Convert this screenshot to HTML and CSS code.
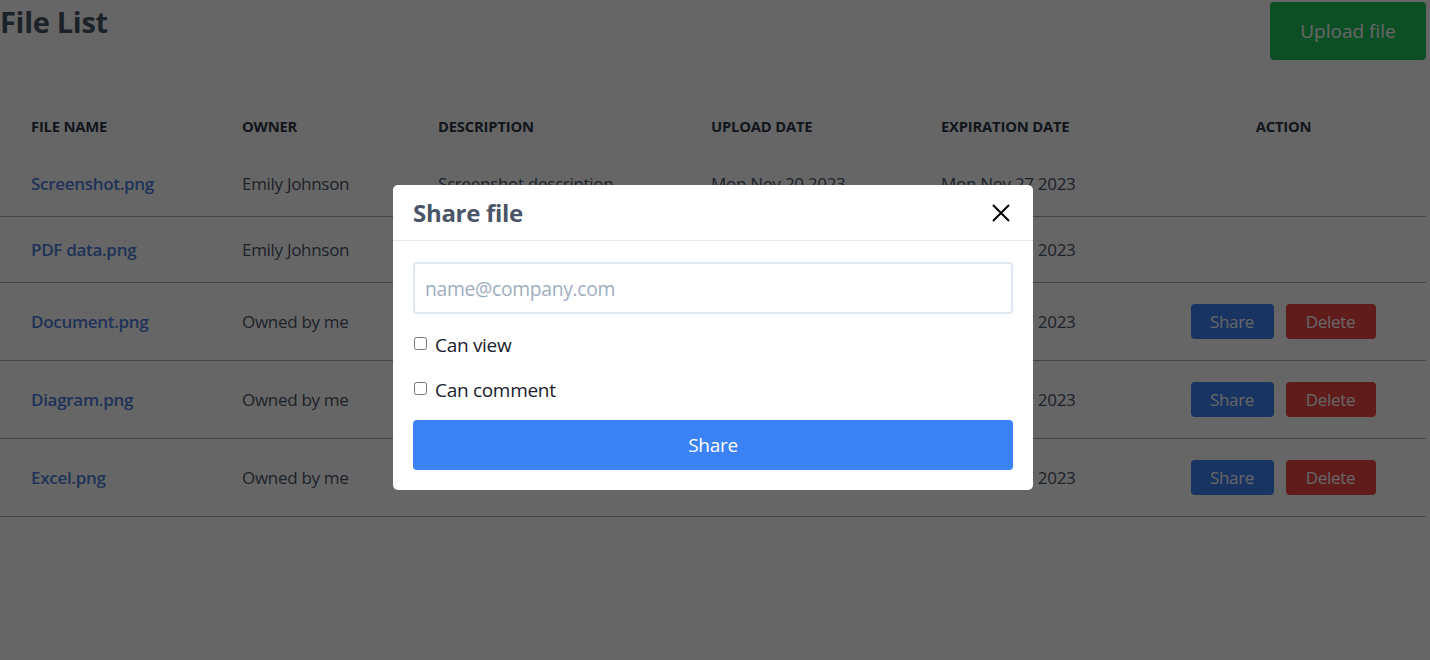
FILE: index.html
```html
<!DOCTYPE html>
<html lang="en">
<head>
<meta charset="utf-8">
<title>File List</title>
<link rel="stylesheet" href="styles.css">
</head>
<body>
<div class="page">
  <div class="top">
    <h1 class="title">File List</h1>
    <button class="upload-btn">Upload file</button>
  </div>
  <table class="files">
    <colgroup>
      <col class="c1"><col class="c2"><col class="c3"><col class="c4"><col class="c5"><col class="c6">
    </colgroup>
    <thead>
      <tr>
        <th>File name</th>
        <th>Owner</th>
        <th>Description</th>
        <th>Upload date</th>
        <th>Expiration date</th>
        <th class="center">Action</th>
      </tr>
    </thead>
    <tbody>
      <tr>
        <td><a class="file-link" href="#">Screenshot.png</a></td>
        <td>Emily Johnson</td>
        <td>Screenshot description</td>
        <td>Mon Nov 20 2023</td>
        <td>Mon Nov 27 2023</td>
        <td class="center"></td>
      </tr>
      <tr>
        <td><a class="file-link" href="#">PDF data.png</a></td>
        <td>Emily Johnson</td>
        <td>PDF data description</td>
        <td>Mon Nov 20 2023</td>
        <td>Mon Nov 27 2023</td>
        <td class="center"></td>
      </tr>
      <tr class="own">
        <td><a class="file-link" href="#">Document.png</a></td>
        <td>Owned by me</td>
        <td>Document description</td>
        <td>Mon Nov 20 2023</td>
        <td>Mon Nov 27 2023</td>
        <td class="center"><div class="actions"><button class="btn btn-share">Share</button><button class="btn btn-delete">Delete</button></div></td>
      </tr>
      <tr class="own">
        <td><a class="file-link" href="#">Diagram.png</a></td>
        <td>Owned by me</td>
        <td>Diagram description</td>
        <td>Mon Nov 20 2023</td>
        <td>Mon Nov 27 2023</td>
        <td class="center"><div class="actions"><button class="btn btn-share">Share</button><button class="btn btn-delete">Delete</button></div></td>
      </tr>
      <tr class="own">
        <td><a class="file-link" href="#">Excel.png</a></td>
        <td>Owned by me</td>
        <td>Excel description</td>
        <td>Mon Nov 20 2023</td>
        <td>Mon Nov 27 2023</td>
        <td class="center"><div class="actions"><button class="btn btn-share">Share</button><button class="btn btn-delete">Delete</button></div></td>
      </tr>
    </tbody>
  </table>
</div>

<div class="overlay">
  <div class="modal">
    <div class="modal-header">
      <h2 class="modal-title">Share file</h2>
      <button class="close-btn" aria-label="Close">
        <svg width="20" height="20" viewBox="0 0 20 20"><path d="M2 2 L18 18 M18 2 L2 18" stroke="#000" stroke-width="2" fill="none"/></svg>
      </button>
    </div>
    <div class="modal-body">
      <input class="email" type="email" placeholder="name@company.com">
      <label class="check"><input type="checkbox"> Can view</label>
      <label class="check"><input type="checkbox"> Can comment</label>
      <button class="share-submit">Share</button>
    </div>
  </div>
</div>
</body>
</html>
```

FILE: styles.css
```css
* { box-sizing: border-box; }
html, body { margin: 0; padding: 0; background: #ffffff; }
body {
  font-family: "Open Sans", "Noto Sans", sans-serif;
  color: #4a5568;
}
.page { width: 1426px; }

.top {
  display: flex;
  justify-content: space-between;
  align-items: flex-start;
  height: 62px;
}
.title {
  margin: 0;
  font-size: 29px;
  line-height: 44px;
  font-weight: 700;
  color: #4a5568;
  letter-spacing: -0.3px;
}
.upload-btn {
  margin-top: 2px;
  width: 156px;
  height: 58px;
  border: 0;
  border-radius: 4px;
  background: #22c55e;
  color: #ffffff;
  font-family: inherit;
  font-size: 19px;
}

.files {
  margin-top: 38px;
  width: 1426px;
  border-collapse: collapse;
  table-layout: fixed;
}
.c1 { width: 211px; }
.c2 { width: 196px; }
.c3 { width: 273px; }
.c4 { width: 230px; }
.c5 { width: 231px; }
.c6 { width: 285px; }

.files th {
  text-align: left;
  padding: 16px 0 15px 31px;
  font-size: 14.8px;
  line-height: 20px;
  font-weight: 700;
  text-transform: uppercase;
  color: #2d3748;
  letter-spacing: -0.2px;
}
.files td {
  padding: 20px 0 20px 31px;
  font-size: 17px;
  line-height: 25px;
  color: #4a5568;
  border-bottom: 1px solid #a0aec0;
  white-space: nowrap;
  overflow: hidden;
  letter-spacing: -0.3px;
}
.files th.center, .files td.center { text-align: center; padding-left: 0; }
.file-link {
  color: #4f7ddb;
  font-weight: 600;
  text-decoration: none;
}
.actions {
  display: flex;
  justify-content: center;
  gap: 12px;
  padding-right: 1px;
}
.btn {
  height: 35px;
  border: 0;
  border-radius: 4px;
  color: #ffffff;
  font-family: inherit;
  font-size: 17px;
  letter-spacing: -0.3px;
}
.btn-share { width: 83px; background: #3b82f6; }
.btn-delete { width: 90px; background: #ef4444; }
.files tr.own td { padding-top: 26px; padding-bottom: 26px; }
.files tr.own td.center { padding-top: 21px; padding-bottom: 21px; }

.overlay {
  position: fixed;
  inset: 0;
  background: rgba(0, 0, 0, 0.6);
}
.modal {
  position: absolute;
  left: 393px;
  top: 185px;
  width: 640px;
  background: #ffffff;
  border-radius: 5px;
}
.modal-header {
  display: flex;
  justify-content: space-between;
  align-items: center;
  height: 56px;
  padding: 0 20px;
  border-bottom: 1px solid #e2e8f0;
}
.modal-title {
  margin: 0;
  font-size: 24px;
  font-weight: 700;
  color: #4a5568;
  letter-spacing: -0.3px;
}
.close-btn {
  border: 0;
  background: none;
  padding: 0;
  margin-right: 2px;
  width: 20px;
  height: 20px;
  display: flex;
}
.modal-body {
  padding: 21px 20px 20px;
  display: flex;
  flex-direction: column;
}
.email {
  width: 600px;
  height: 52px;
  border: 2px solid #e2e8f0;
  border-radius: 4px;
  padding: 0 10px;
  font-family: inherit;
  font-size: 19.3px;
  color: #4a5568;
  letter-spacing: -0.3px;
  outline: none;
}
.email::placeholder { color: #a0aec0; }
.check {
  display: flex;
  align-items: center;
  height: 30px;
  font-size: 19px;
  color: #1a202c;
  letter-spacing: -0.3px;
}
.email + .check { margin-top: 16px; }
.check + .check { margin-top: 15px; }
.check input {
  width: 13px;
  height: 13px;
  margin: 0 8px 4px 1px;
}
.share-submit {
  margin-top: 15px;
  height: 50px;
  width: 600px;
  border: 0;
  border-radius: 4px;
  background: #3b82f6;
  color: #ffffff;
  font-family: inherit;
  font-size: 19px;
  letter-spacing: -0.3px;
}
```
